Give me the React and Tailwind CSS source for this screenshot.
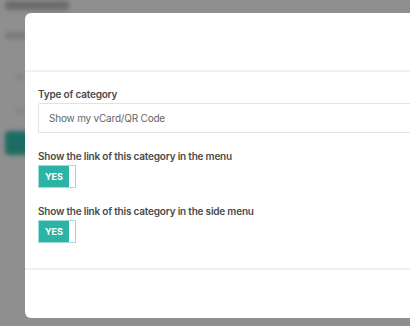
import React from 'react';

function Toggle() {
  return (
    <div className="flex h-[23px] w-[38px] border border-[#9fdcd5]">
      <div className="flex w-[30px] items-center justify-center bg-[#2bb3a6] text-[9px] font-bold text-white">YES</div>
      <div className="flex-1 bg-white" />
    </div>
  );
}

function Field({ label, children }) {
  return (
    <div>
      <div className="text-[10px] font-semibold leading-[14px] tracking-[-0.2px] text-[#4a4a4a]">{label}</div>
      <div className="mt-[2px]">{children}</div>
    </div>
  );
}

export default function App() {
  return (
    <div className="relative h-[326px] w-[410px] overflow-hidden bg-[#8f8f8f] font-['Inter',sans-serif]">
      {/* page behind the modal */}
      <div className="flex flex-col gap-4 px-[5px] pt-[1px] blur-[2px]">
        <div className="h-[9px] w-[64px] rounded bg-[#6c6c6c]" />
        <div className="mt-[6px] h-[7px] w-[22px] rounded bg-[#7a7a7a]" />
        <div className="mt-[20px] ml-[10px] h-[4px] w-[10px] rounded bg-[#828282]" />
        <div className="mt-[14px] ml-[10px] h-[4px] w-[10px] rounded bg-[#828282]" />
        <div className="mt-[2px] h-[24px] w-[40px] rounded bg-[#1d6c64]" />
      </div>

      {/* modal */}
      <div className="absolute left-[25px] top-[13px] w-[440px] rounded-[6px] bg-white">
        <div className="h-[59px] border-b-2 border-[#f0f0f0]" />
        <div className="flex flex-col gap-[16px] pb-[25px] pl-[13px] pt-[15px]">
          <Field label="Type of category">
            <div className="flex h-[30px] items-center rounded-[2px] border border-[#e2e2e2] pl-[10px] text-[10px] tracking-[-0.2px] text-[#666]">
              Show my vCard/QR Code
            </div>
          </Field>
          <Field label="Show the link of this category in the menu">
            <Toggle />
          </Field>
          <Field label="Show the link of this category in the side menu">
            <Toggle />
          </Field>
        </div>
        <div className="h-[50px] border-t-2 border-[#f0f0f0]" />
      </div>
    </div>
  );
}
